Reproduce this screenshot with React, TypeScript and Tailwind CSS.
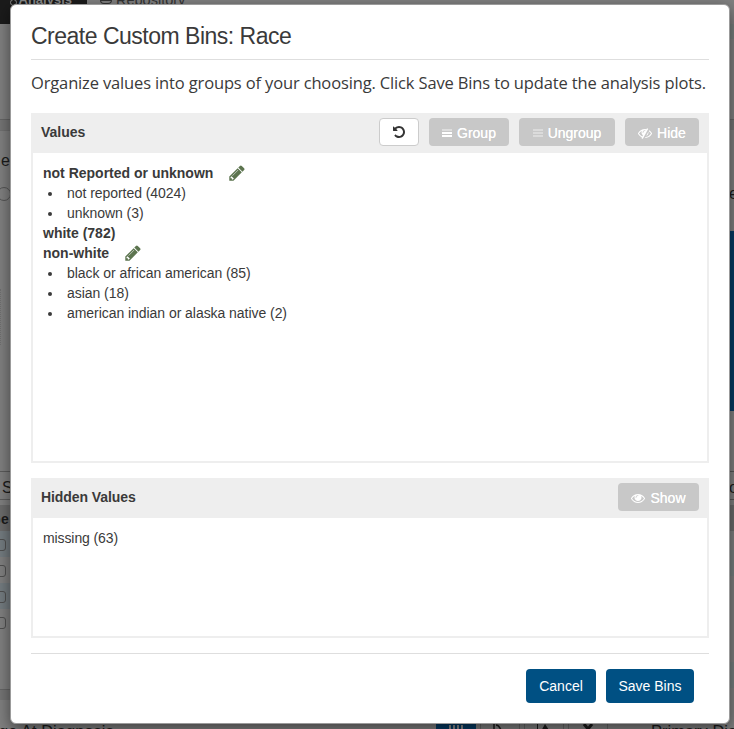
import React from "react";

const sans = "font-['Liberation_Sans',Arial,sans-serif]";

const paths = {
  undo: "M1664 896q0 156-61 298t-164 245-245 164-298 61q-172 0-327-72.5t-264-204.5q-7-10-6.5-22.5t8.5-20.5l137-138q10-9 25-9 16 2 23 12 73 95 179 147t225 52q104 0 198.5-40.5t163.5-109.5 109.5-163.5 40.5-198.5-40.5-198.5-109.5-163.5-163.5-109.5-198.5-40.5q-98 0-188 35.5t-160 101.5l137 138q31 30 14 69-17 40-59 40h-448q-26 0-45-19t-19-45v-448q0-42 40-59 39-17 69 14l130 129q107-101 244.5-156.5t284.5-55.5q156 0 298 61t245 164 164 245 61 298z",
  pencil: "M491 1536l91-91-235-235-91 91v107h128v128h107zm523-928q0-22-22-22-10 0-17 7l-542 542q-7 7-7 17 0 22 22 22 10 0 17-7l542-542q7-7 7-17zm-54-192l416 416-832 832h-416v-416zm683 96q0 53-37 90l-166 166-416-416 166-165q36-38 90-38 53 0 91 38l235 234q37 39 37 91z",
  eye: "M1664 960q-152-236-381-353 61 104 61 225 0 185-131.5 316.5t-316.5 131.5-316.5-131.5-131.5-316.5q0-121 61-225-229 117-381 353 133 205 333.5 326.5t434.5 121.5 434.5-121.5 333.5-326.5zm-720-384q0-20-14-34t-34-14q-125 0-214.5 89.5t-89.5 214.5q0 20 14 34t34 14 34-14 14-34q0-86 61-147t147-61q20 0 34-14t14-34zm848 384q0 34-20 69-140 230-376.5 368.5t-499.5 138.5-499.5-139-376.5-368q-20-35-20-69t20-69q140-229 376.5-368t499.5-139 499.5 139 376.5 368q20 35 20 69z",
  eyeSlash: "M555 1335l78-141q-87-63-136-159t-49-203q0-121 61-225-229 117-381 353 167 258 427 375zm389-759q0-20-14-34t-34-14q-125 0-214.5 89.5t-89.5 214.5q0 20 14 34t34 14 34-14 14-34q0-86 61-147t147-61q20 0 34-14t14-34zm363-191q0 7-1 9-106 189-316 567t-315 566l-49 89q-10 16-28 16-12 0-134-70-16-10-16-28 0-12 44-87-143-65-263.5-173t-208.5-245q-20-31-20-69t20-69q153-235 380-371t496-136q89 0 180 17l54-97q10-16 28-16 5 0 18 6t31 15.5 33 18.5 31.5 18.5 19.5 11.5q16 10 16 27zm37 447q0 139-79 253.5t-209 164.5l280-502q8 45 8 84zm448 128q0 35-20 69-39 64-109 145-150 172-347.5 267t-419.5 95l74-132q212-18 392.5-137t301.5-307q-115-179-282-294l63-112q95 64 182.5 153t144.5 184q20 34 20 69z",
};

function Icon({ name, className }: { name: keyof typeof paths; className: string }) {
  return (
    <svg viewBox="0 0 1792 1792" fill="currentColor" className={`shrink-0 ${className}`}>
      <path d={paths[name]} />
    </svg>
  );
}

function Bars({ faded }: { faded?: boolean }) {
  return (
    <span className={`mt-[2px] flex w-[10px] flex-col gap-px ${faded ? "opacity-35" : ""}`}>
      <span className={`h-[2px] bg-white ${faded ? "" : "opacity-40"}`} />
      <span className="h-[2px] bg-white" />
      <span className="h-[2px] bg-white" />
    </span>
  );
}

function GreyButton({ icon, label, width }: { icon: React.ReactNode; label: string; width: string }) {
  return (
    <button className={`flex h-7 items-center justify-center gap-[5px] rounded bg-[#c8c8c8] text-sm text-white ${width}`}>
      {icon}
      <span className="mt-[2px] [text-shadow:0_0_0.5px_white]">{label}</span>
    </button>
  );
}

function GroupName({ children, pencil }: { children: React.ReactNode; pencil?: boolean }) {
  return (
    <div className="flex h-5 items-center font-bold">
      <span>{children}</span>
      {pencil && <Icon name="pencil" className="ml-[15px] size-[18px] text-[#5c744f]" />}
    </div>
  );
}

function Item({ children }: { children: React.ReactNode }) {
  return (
    <li className="flex h-5 items-center tracking-[-0.05px]">
      <span className="mt-px mr-[15px] ml-[5px] size-1 rounded-full bg-[#3a3a3a]" />
      {children}
    </li>
  );
}

function Checkbox() {
  return <div className="-ml-[6px] size-[12px] rounded-[3px] border border-[#505050]" />;
}

function Backdrop() {
  return (
    <div className="flex h-full flex-col bg-[#808080] text-[#1b1b1b]">
      <div className="flex h-6 shrink-0 overflow-hidden text-sm leading-[14px]">
        <div className="flex w-[87px] justify-end bg-[#1b1b1b] pr-[15px] text-[#8a8a8a]">
          <span className="-mt-[1px] mr-[2px] size-[7px] rounded-full border border-[#8a8a8a]" />
          <span className="-mt-[7px] text-[13px] font-bold">Analysis</span>
        </div>
        <span className="ml-[13px] h-1 w-3 rounded-b border border-[#333]" />
        <span className="-mt-[7px] ml-1 text-[14.5px] text-[#333]">Repository</span>
      </div>
      <div className="flex h-[676px] shrink-0 justify-between">
        <div className="w-[20px] overflow-hidden">
          <div className="h-24 border-b border-[#666]" />
          <div className="h-[10px] bg-[#757575]" />
          <div className="h-[342px] border-y border-[#707070] border-b-[#5c5c5c]">
            <div className="mt-[20px] ml-[1px] h-5 text-base leading-5">e</div>
            <div className="mt-[16px] -ml-[3px] size-[14px] rounded-full border border-[#555]" />
            <div className="mt-[88px] h-[56px] w-px border-r border-dotted border-[#707070]" />
          </div>
          <div className="h-[28px] border-b border-[#5c5c5c] pl-[2px] text-base leading-[31px]">S</div>
          <div className="mt-[5px] h-[26px] bg-[#6c6c6c] text-[14px] leading-[28px] font-bold"><span className="-ml-[10px]">Ge</span></div>
          <div className="h-[26px] bg-[#747c80] pt-2"><Checkbox /></div>
          <div className="h-[26px] pt-2"><Checkbox /></div>
          <div className="h-[26px] bg-[#747c80] pt-2"><Checkbox /></div>
          <div className="h-[81px] border-b border-[#666] pt-2"><Checkbox /></div>
          <div className="h-[10px] bg-[#757575]" />
        </div>
        <div className="w-[5px] overflow-hidden">
          <div className="h-[15px] bg-[#78807e]" />
          <div className="h-[81px] border-b border-[#666]" />
          <div className="h-[10px] bg-[#757575]" />
          <div className="h-[101px] pt-[54px] text-base leading-5">e</div>
          <div className="h-[180px] bg-[#063b63]" />
          <div className="h-[61px] border-b border-[#555]" />
          <div className="h-[28px] border-b border-[#555] text-base leading-[31px]">o</div>
          <div className="mt-[5px] h-[26px] bg-[#6c6c6c]" />
          <div className="mt-[19px] h-[26px] bg-[#788080]" />
          <div className="h-[78px]" />
          <div className="mt-2 h-[26px] bg-[#788080]" />
        </div>
      </div>
      <div className="flex h-[29px] overflow-hidden pt-[19px] text-[16.5px] leading-[24px] whitespace-nowrap">
        <span className="-ml-[12px] w-[448px] shrink-0">Age At Diagnosis</span>
        <span className="flex h-5 w-10 shrink-0 justify-center gap-[2px] bg-[#063b63] pt-[6px]">
          <span className="w-[2px] bg-[#8a8a8a]" />
          <span className="w-[2px] bg-[#8a8a8a]" />
          <span className="w-[2px] bg-[#8a8a8a]" />
          <span className="w-[2px] bg-[#8a8a8a]" />
        </span>
        <span className="ml-1 flex h-5 w-10 shrink-0 justify-center border-x border-[#666]">
          <svg viewBox="0 0 14 14" className="mt-[5px] size-[14px]" fill="none" stroke="currentColor" strokeWidth="1.5">
            <path d="M1 0v13h13M3 1c5 0 4 8 10 9" />
          </svg>
        </span>
        <span className="ml-1 flex h-5 w-10 shrink-0 justify-center border-x border-[#666]">
          <svg viewBox="0 0 14 14" className="mt-[5px] size-[14px]" fill="currentColor">
            <path d="M0 0h1v14H0zM8 0l6 9H3z" />
          </svg>
        </span>
        <span className="ml-1 flex h-5 w-10 shrink-0 justify-center border-x border-[#666]">
          <svg viewBox="0 0 14 14" className="mt-[5px] size-[14px]" stroke="currentColor" strokeWidth="3">
            <path d="M3 0l8 10M11 0L3 10" />
          </svg>
        </span>
        <span className="ml-[43px] shrink-0">Primary Diagnosis</span>
      </div>
    </div>
  );
}

export default function App() {
  return (
    <div className={`relative h-[729px] w-[734px] overflow-hidden text-sm text-[#3a3a3a] ${sans}`}>
      <Backdrop />
      <div className="absolute top-1 left-[10px] flex h-[720px] w-[720px] flex-col rounded-md border border-[#9b9b9b] bg-white px-5 shadow-[0_5px_15px_rgba(0,0,0,0.5)]">
        <h1 className="h-[55px] border-b border-[#dedede] text-[23px] leading-[63px] tracking-[-0.5px] whitespace-nowrap">
          Create Custom Bins: Race
        </h1>
        <p className="h-[53px] font-['Open_Sans',sans-serif] text-[16.5px] leading-[46px] tracking-[-0.145px] whitespace-nowrap">
          Organize values into groups of your choosing. Click Save Bins to update the analysis plots.
        </p>
        <section className="flex h-[350px] w-[678px] flex-col">
          <header className="flex h-10 items-center bg-[#eee] px-[10px] pb-[2px]">
            <h2 className="font-bold">Values</h2>
            <div className="ml-auto flex gap-[10px]">
              <button className="flex h-7 w-10 items-center justify-center rounded border border-[#ccc] bg-white">
                <Icon name="undo" className="size-[14px] text-[#333]" />
              </button>
              <GreyButton icon={<Bars />} label="Group" width="w-20" />
              <GreyButton icon={<Bars faded />} label="Ungroup" width="w-24" />
              <GreyButton icon={<Icon name="eyeSlash" className="mt-[2px] size-[14px]" />} label="Hide" width="w-[74px]" />
            </div>
          </header>
          <div className="flex-1 border-2 border-t-0 border-[#eee] px-[10px] pt-[10px]">
            <GroupName pencil>not Reported or unknown</GroupName>
            <ul>
              <Item>not reported (4024)</Item>
              <Item>unknown (3)</Item>
            </ul>
            <GroupName>white (782)</GroupName>
            <GroupName pencil>non-white</GroupName>
            <ul>
              <Item>black or african american (85)</Item>
              <Item>asian (18)</Item>
              <Item>american indian or alaska native (2)</Item>
            </ul>
          </div>
        </section>
        <section className="mt-[15px] flex h-[160px] w-[678px] flex-col">
          <header className="flex h-10 items-center justify-between bg-[#eee] px-[10px] pb-[2px]">
            <h2 className="font-bold tracking-[-0.08px]">Hidden Values</h2>
            <GreyButton icon={<Icon name="eye" className="mt-[2px] size-[14px]" />} label="Show" width="w-[81px]" />
          </header>
          <div className="flex-1 border-2 border-t-0 border-[#eee] px-[10px] pt-[10px] leading-5 tracking-[-0.1px]">missing (63)</div>
        </section>
        <footer className="mt-[15px] flex justify-end gap-[10px] border-t border-[#dedede] pt-[15px] pr-[15px] text-white [text-shadow:0_0_0.5px_white]">
          <button className="h-[34px] w-[70px] rounded bg-[#005083]">Cancel</button>
          <button className="h-[34px] w-[88px] rounded bg-[#005083]">Save Bins</button>
        </footer>
      </div>
    </div>
  );
}
